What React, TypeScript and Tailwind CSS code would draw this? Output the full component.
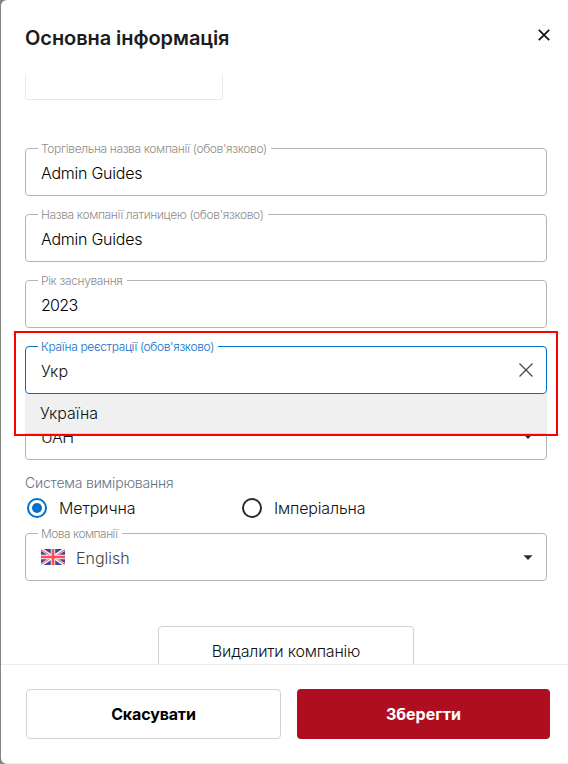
import { useState } from 'react';
import type { ReactNode } from 'react';
import clsx from 'clsx';

interface FieldProps {
    label?: string;
    labelClass?: string;
    active?: boolean;
    children: ReactNode;
}

function Field({ label, labelClass = 'tracking-[-0.36px]', active, children }: FieldProps) {
    return (
        <div
            className={clsx(
                'relative flex h-12 items-center rounded border pl-[15px] pr-[13px]',
                active ? 'border-[#0070cc]' : 'border-[#b5b5b5]'
            )}
        >
            {label && (
                <span
                    className={clsx(
                        'absolute -top-[7px] left-3 whitespace-nowrap bg-white pl-[3px] pr-1 text-xs leading-[14px]',
                        active ? 'text-[#0f6fc8]' : 'text-[#8c8c8c]',
                        labelClass
                    )}
                >
                    {label}
                </span>
            )}
            {children}
        </div>
    );
}

function Caret() {
    return (
        <svg width="10" height="5" viewBox="0 0 10 5" className="ml-auto shrink-0">
            <path d="M0.5 0.3h9L5 4.9z" fill="#2b2b2b" />
        </svg>
    );
}

function Flag() {
    return (
        <svg width="24" height="16" viewBox="0 0 24 16" className="shrink-0">
            <path fill="#41479b" d="M0 0h24v16H0z" />
            <path stroke="#f5f5f5" strokeWidth="3" d="M0 0l24 16M24 0L0 16" />
            <path stroke="#ff4b55" strokeWidth="1" d="M0 0.6l10 6.6M24 15.4l-10-6.6M24 0.6l-9 6M0 15.4l9-6" />
            <path stroke="#f5f5f5" strokeWidth="4.4" d="M12 0v16M0 8h24" />
            <path stroke="#ff4b55" strokeWidth="2.6" d="M12 0v16M0 8h24" />
        </svg>
    );
}

interface RadioProps {
    label: string;
    checked: boolean;
    onSelect: () => void;
    className: string;
}

function Radio({ label, checked, onSelect, className }: RadioProps) {
    return (
        <button onClick={onSelect} className={clsx('flex items-center gap-3 text-left text-base', className)}>
            <span
                className={clsx(
                    'flex size-5 shrink-0 items-center justify-center rounded-full border-2',
                    checked ? 'border-[#0070cc]' : 'border-[#2b2b2b]'
                )}
            >
                {checked && <span className="size-2.5 rounded-full bg-[#0070cc]" />}
            </span>
            {label}
        </button>
    );
}

export default function App() {
    const [system, setSystem] = useState('metric');

    return (
        <div className="h-[764px] w-[568px] overflow-hidden bg-[#858585] pl-px font-['Inter',sans-serif] font-[350] text-[#111]">
            <div className="flex h-full flex-col overflow-hidden rounded-l-md border-b border-[#ececec] bg-white">
                <header className="flex h-[75px] shrink-0 items-start justify-between pl-6 pr-[18px]">
                    <h2 className="mt-6 text-xl font-semibold leading-7 tracking-[-0.07px] text-[#1c1c1c]">Основна інформація</h2>
                    <button className="mt-[29px]" aria-label="Закрити">
                        <svg width="12" height="12" viewBox="0 0 12 12" stroke="#1a1a1a" strokeWidth="1.9">
                            <path d="M0.8 0.8l10.4 10.4M11.2 0.8L0.8 11.2" />
                        </svg>
                    </button>
                </header>

                <main className="h-[589px] shrink-0 overflow-hidden pl-6 pr-[21px]">
                    <div className="h-[25px] w-[198px] rounded-b border border-t-0 border-[#e8e8e8]" />

                    <div className="mt-12 flex flex-col gap-[18px]">
                        <Field label="Торгівельна назва компанії (обов'язково)">
                            <span className="pt-0.5 tracking-[-0.25px] text-black">Admin Guides</span>
                        </Field>
                        <Field label="Назва компанії латиницею (обов'язково)">
                            <span className="pt-0.5 tracking-[-0.25px] text-black">Admin Guides</span>
                        </Field>
                        <Field label="Рік заснування">
                            <span className="pt-0.5 tracking-[-0.7px] text-black">2023</span>
                        </Field>

                        <div className="relative">
                            <Field label="Країна реєстрації (обов'язково)" active>
                                <span className="pt-0.5 tracking-[0px]">Укр</span>
                                <svg width="14" height="14" viewBox="0 0 14 14" stroke="#444" strokeWidth="1.2" className="ml-auto">
                                    <path d="M0.5 0.5l13 13M13.5 0.5l-13 13" />
                                </svg>
                            </Field>
                            <div className="absolute inset-x-0 top-12 z-10 flex h-10 items-center border-b border-[#d5d5d5] bg-[#f0f0f0] pb-0.5 pl-[15px]">
                                <span className="tracking-[-0.05px]">Україна</span>
                            </div>
                            {/* highlight frame around the open dropdown */}
                            <div className="pointer-events-none absolute -left-[11px] -right-[11px] -top-[15px] z-20 h-[105px] border-2 border-[#ff0000]" />
                        </div>

                        <Field>
                            <span className="pt-0.5 tracking-[-0.5px]">UAH</span>
                            <Caret />
                        </Field>
                    </div>

                    <p className="mt-[13px] text-sm leading-5 tracking-[-0.2px] text-[#667282]">Система вимірювання</p>
                    <div className="mt-1 flex h-[22px] items-center pl-0.5">
                        <Radio
                            label="Метрична"
                            checked={system === 'metric'}
                            onSelect={() => setSystem('metric')}
                            className="w-[215px] tracking-[-0.1px]"
                        />
                        <Radio
                            label="Імперіальна"
                            checked={system === 'imperial'}
                            onSelect={() => setSystem('imperial')}
                            className="tracking-[-0.17px]"
                        />
                    </div>

                    <div className="mt-3.5">
                        <Field label="Мова компанії" labelClass="tracking-[-0.53px]">
                            <Flag />
                            <span className="ml-[11px] pt-0.5 tracking-[0px] text-[#444]">English</span>
                            <Caret />
                        </Field>
                    </div>

                    <button className="ml-[133px] mt-[45px] flex h-[50px] w-[256px] items-center justify-center rounded border border-[#d0d0d0] tracking-[-0.22px]">
                        Видалити компанію
                    </button>
                </main>

                <footer className="flex grow items-start gap-4 border-t border-[#ececec] pl-[25px] pt-6">
                    <button className="h-[50px] w-[255px] rounded border border-[#d2d2d2] font-bold tracking-[-0.15px] text-black">
                        Скасувати
                    </button>
                    <button className="h-[50px] w-[253px] rounded bg-[#af0e21] font-bold tracking-[0px] text-white">
                        Зберегти
                    </button>
                </footer>
            </div>
        </div>
    );
}
